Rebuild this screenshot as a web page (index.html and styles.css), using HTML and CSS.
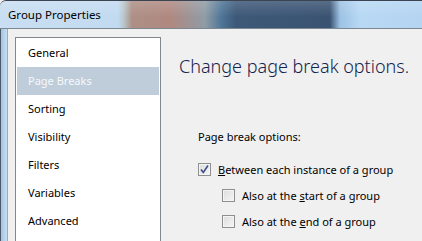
FILE: index.html
```html
<!DOCTYPE html>
<html lang="en">
<head>
  <meta charset="UTF-8">
  <title>Group Properties</title>
  <link rel="stylesheet" href="styles.css">
</head>
<body>

  <div class="window">
    <div class="titlebar">Group Properties</div>
    <div class="frame">
      <div class="frame-side"></div>
      <div class="client">

        <ul class="nav">
          <li>General</li>
          <li class="selected">Page Breaks</li>
          <li>Sorting</li>
          <li>Visibility</li>
          <li>Filters</li>
          <li>Variables</li>
          <li>Advanced</li>
        </ul>

        <div class="pane">
          <h1>Change page break options.</h1>
          <p class="label">Page break options:</p>
          <label class="check">
            <span class="box checked">
              <svg width="11" height="11" viewBox="0 0 11 11"><path d="M2 5.5 L4.3 8.5 L9 1.5" fill="none" stroke="#3b4f8e" stroke-width="1.6"/></svg>
            </span>
            <span><u>B</u>etween each instance of a group</span>
          </label>
          <label class="check sub">
            <span class="box"></span>
            <span>Also at the <u>s</u>tart of a group</span>
          </label>
          <label class="check sub">
            <span class="box"></span>
            <span>Also at the <u>e</u>nd of a group</span>
          </label>
        </div>

      </div>
    </div>
  </div>

</body>
</html>
```

FILE: styles.css
```css
body {
  margin: 0;
  padding: 0;
  width: 422px;
  height: 241px;
  overflow: hidden;
  font-family: "Segoe UI", "Noto Sans", sans-serif;
  font-size: 11px;
  color: #000;
  background: #f0f0f0;
}

.window {
  display: flex;
  flex-direction: column;
  height: 241px;
}

.titlebar {
  height: 27px;
  line-height: 28px;
  padding-left: 8px;
  font-size: 11.5px;
  border-top: 1px solid #3b4450;
  border-bottom: 1px solid #7d8790;
  border-top-left-radius: 6px;
  color: #000;
  background:
    linear-gradient(to bottom, rgba(255,255,255,0.15), rgba(255,255,255,0) 60%),
    linear-gradient(to right,
      #c9def2 0, #c2daf0 118px, #b8c4c8 124px,
      #ad8f86 132px, #b08880 170px, #8f9ca6 205px,
      #4d7496 222px, #3d5878 236px, #3a5372 330px,
      #9dc2e4 340px, #b8d8f4 360px, #b4d4f1 422px);
}

.frame {
  flex: 1;
  display: flex;
  min-height: 0;
}

.frame-side {
  width: 6px;
  border-left: 1px solid #4a5868;
  background: linear-gradient(to right, #a3c4e4, #c8def2);
}

.client {
  flex: 1;
  display: flex;
  border-left: 1px solid #a0aab4;
  padding: 8px 0 0 7px;
  background: #f0f0f0;
}

.nav {
  flex-shrink: 0;
  list-style: none;
  margin: 0;
  padding: 1px;
  width: 142px;
  border: 1px solid #828790;
  border-bottom: none;
  background: #fff;
}

.nav li {
  height: 28px;
  line-height: 28px;
  padding-left: 11px;
}

.nav li.selected {
  background: #bfcddb;
  color: #f6f8fa;
}

.pane {
  flex: 1;
  min-width: 0;
  display: flex;
  flex-direction: column;
  padding: 15px 0 0 18px;
}

h1 {
  margin: 0;
  font-size: 18px;
  font-weight: 300;
  line-height: 28px;
  white-space: nowrap;
  color: #15244d;
}

.label {
  margin: 49px 0 0 19px;
  line-height: 16px;
}

.check {
  display: flex;
  align-items: center;
  gap: 7px;
  height: 20px;
  margin: 14px 0 0 19px;
  white-space: nowrap;
}

.check.sub {
  margin: 6px 0 0 43px;
}

.box {
  flex-shrink: 0;
  width: 11px;
  height: 11px;
  border: 1px solid #8e8f8f;
  background: linear-gradient(135deg, #dcdcdc, #f6f6f6);
  box-shadow: inset 0 0 0 1px #f4f4f4;
  display: flex;
}
```
